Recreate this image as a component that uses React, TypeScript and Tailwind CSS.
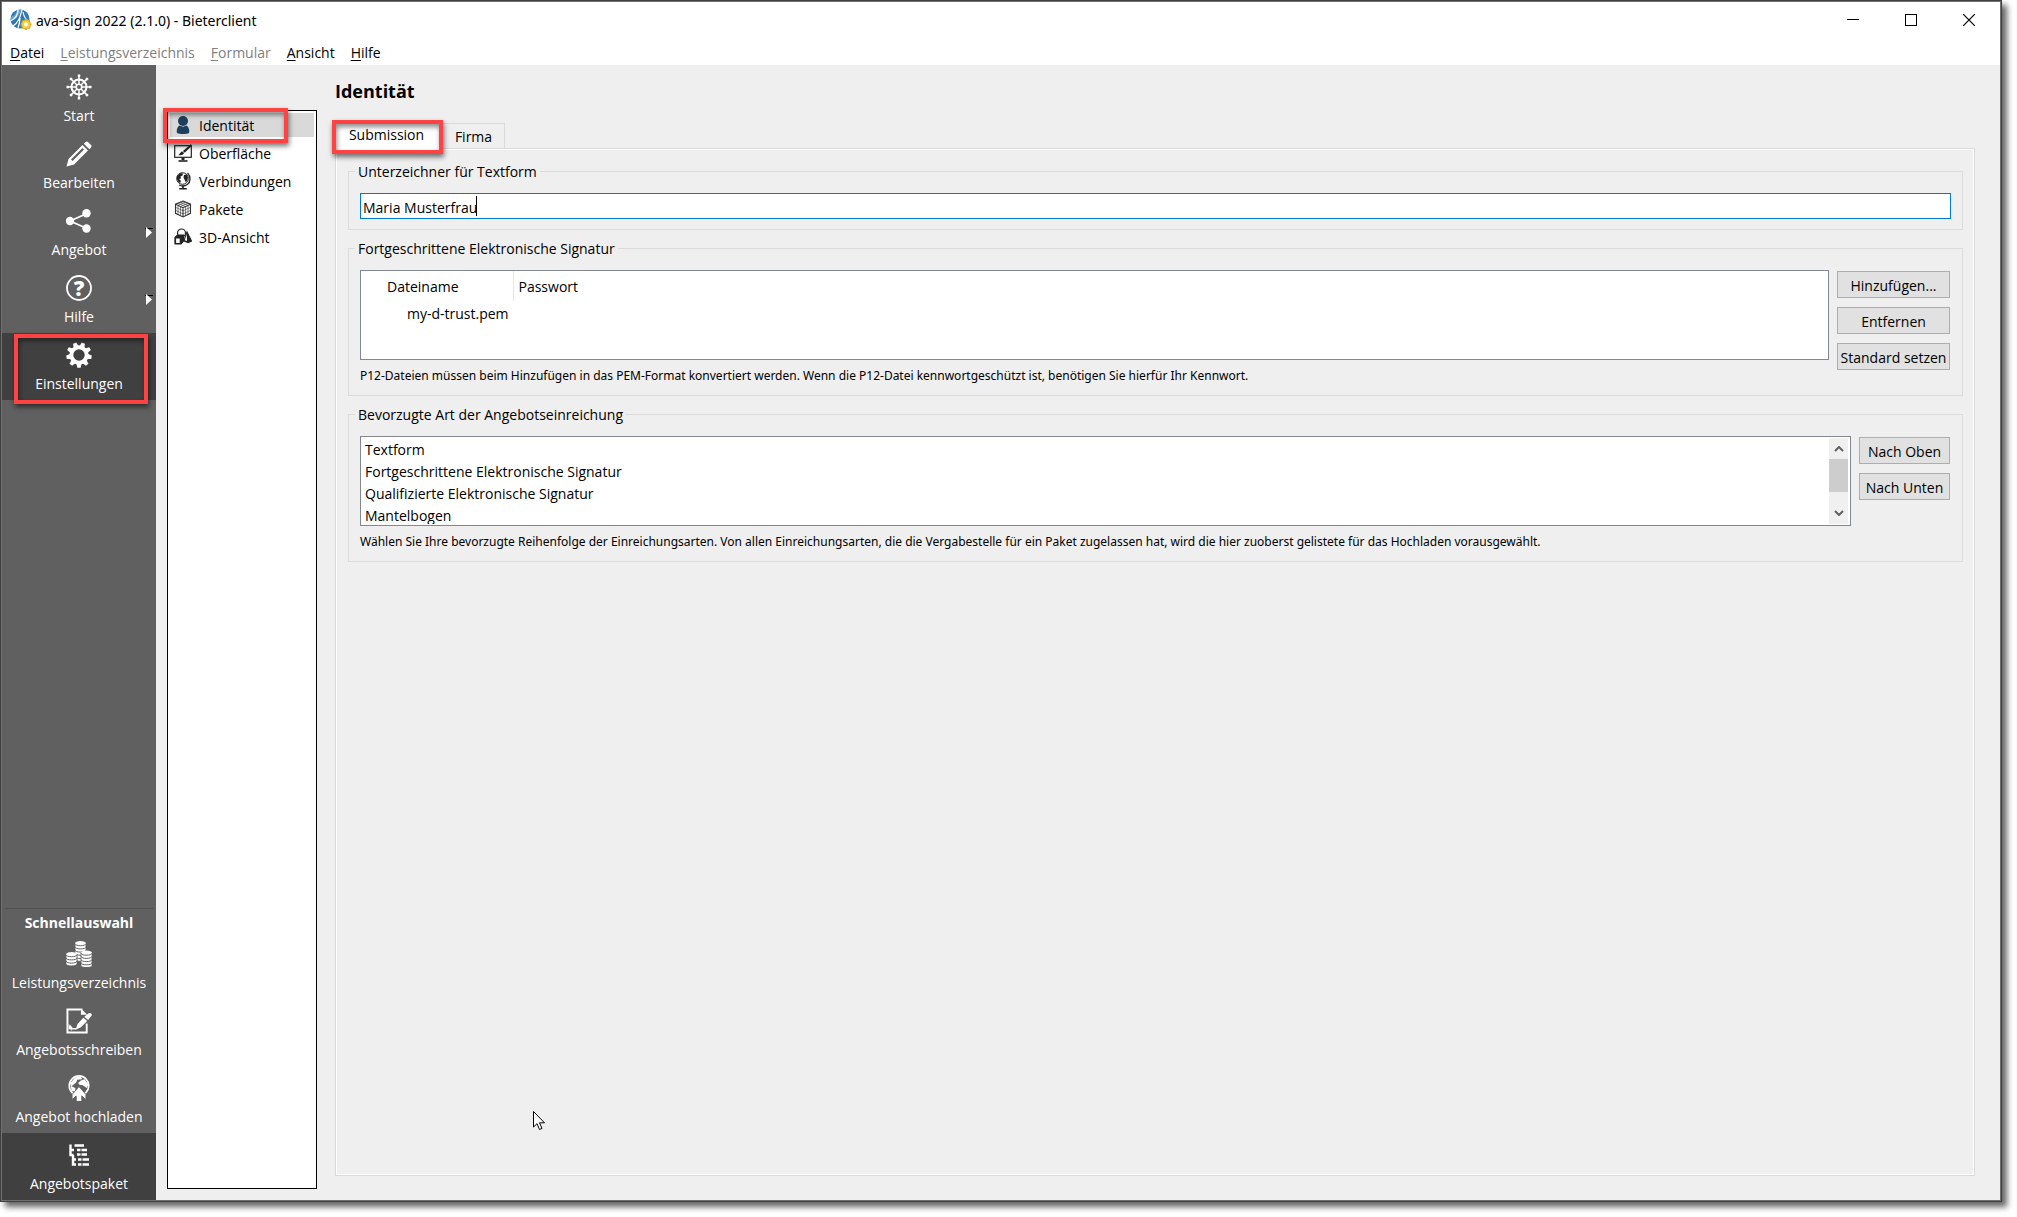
import type { ReactNode } from 'react';

type IconProps = { className?: string };

const AppLogo = () => (
  <svg viewBox="0 0 22 22" className="h-[22px] w-[22px] shrink-0" aria-hidden="true">
    <circle cx="10" cy="10" r="9.5" fill="#2f78b8" />
    <path d="M1 8 C4 7 6 5 7 1 L11 0.5 C10 6 7 10 0.5 12 Z" fill="#6aa6d8" />
    <path d="M8 0.500 C8 7 5 10 0.500 12 M12 1 C10 8 9 13 3 17 M10 9 C10 13 9 16 8 19 M13 3 C14 8 16 11 19 12" fill="none" stroke="#fff" strokeWidth="1.2" />
    <circle cx="16" cy="15.500" r="5" fill="#e3b71f" />
    <path d="M16 10v11M10.500 15.500h11M12.100 11.600l7.800 7.800M19.900 11.600l-7.800 7.800" stroke="#d6a81c" strokeWidth="2" />
    <circle cx="16" cy="15.500" r="4" fill="#f0cf4a" />
    <circle cx="16" cy="15.500" r="2" fill="#fff" />
  </svg>
);

const WheelIcon = ({ className }: IconProps) => (
  <svg viewBox="0 0 26 26" className={className} fill="none" stroke="currentColor" aria-hidden="true">
    <circle cx="13" cy="13" r="7.5" strokeWidth="2" />
    <circle cx="13" cy="13" r="2.8" strokeWidth="1.6" />
    {[0, 45, 90, 135, 180, 225, 270, 315].map((a) => (
      <g key={a} transform={`rotate(${a} 13 13)`}>
        <path d="M13 1v9.500" strokeWidth="1.5" />
        <path d="M13 0.500v2.500" strokeWidth="2.5" />
      </g>
    ))}
  </svg>
);

const PencilIcon = ({ className }: IconProps) => (
  <svg viewBox="0 0 26 26" className={className} fill="currentColor" aria-hidden="true">
    <path fillRule="evenodd" d="M0.500 25.500L2.500 18L16.500 4L22 9.500L8 23.500Z M5 18.500L6.500 20L18 8.500L16.500 7Z" />
    <path d="M17.800 2.700L19.500 1C20.300 0.300 21.300 0.300 22 1L25 4C25.700 4.700 25.700 5.700 25 6.500L23.300 8.200Z" />
  </svg>
);

const ShareIcon = ({ className }: IconProps) => (
  <svg viewBox="0 0 26 26" className={className} fill="currentColor" aria-hidden="true">
    <path d="M4 13L21 5.500M4 13L21 20.500" stroke="currentColor" strokeWidth="1.8" />
    <circle cx="4" cy="13" r="4.200" />
    <circle cx="20.500" cy="5.300" r="4.200" />
    <circle cx="20.500" cy="20.500" r="4.200" />
  </svg>
);

const HelpIcon = ({ className }: IconProps) => (
  <svg viewBox="0 0 26 26" className={className} fill="currentColor" aria-hidden="true">
    <circle cx="13" cy="13" r="12" fill="none" stroke="currentColor" strokeWidth="1.8" />
    <text x="13" y="20.500" textAnchor="middle" fontFamily="Open Sans" fontSize="21" fontWeight="800">?</text>
  </svg>
);

const GearIcon = ({ className }: IconProps) => (
  <svg viewBox="0 0 26 26" className={className} fill="currentColor" aria-hidden="true">
    <circle cx="13" cy="13" r="7.700" fill="none" stroke="currentColor" strokeWidth="4" />
    {[20, 60, 100, 140, 180, 220, 260, 300, 340].map((a) => (
      <path key={a} transform={`rotate(${a} 13 13)`} d="M10.300 5L11.300 0.300H14.700L15.700 5Z" />
    ))}
  </svg>
);

const Coins = ({ x, y, rows }: { x: number; y: number; rows: number }) => (
  <g>
    <path d={`M${x} ${y + 2.2}v${rows * 3.2}c0 2.800 11 2.800 11 0v-${rows * 3.2}z`} stroke="#606060" strokeWidth="0.800" />
    <ellipse cx={x + 5.5} cy={y + 2.2} rx="5.500" ry="2.100" />
    {Array.from({ length: rows }, (_, i) => (
      <path key={i} d={`M${x} ${y + 2.6 + i * 3.2}c0 2.800 11 2.800 11 0`} fill="none" stroke="#606060" strokeWidth="1" />
    ))}
  </g>
);

const CoinsIcon = ({ className }: IconProps) => (
  <svg viewBox="0 0 26 26" className={className} fill="currentColor" aria-hidden="true">
    <Coins x={9} y={0} rows={5} />
    <Coins x={0} y={11} rows={3} />
    <Coins x={15} y={9.5} rows={4} />
  </svg>
);

const LetterIcon = ({ className }: IconProps) => (
  <svg viewBox="0 0 27 26" className={className} fill="none" stroke="currentColor" aria-hidden="true">
    <path d="M17 1H1.500v24h20V15.500" strokeWidth="2" />
    <path d="M15.500 0L22 6.500H15.500z" fill="currentColor" stroke="none" />
    <path d="M3.500 21.500v-3l1.500 2.500v-2l1.500 2h4" strokeWidth="1.500" />
    <path d="M10 22l2-6L18 9.500l4 3.500-6.500 6.500z" fill="currentColor" stroke="none" />
    <path d="M19 8.500L23.500 5c2-1 4 0.500 3 2.500L23 12z" fill="currentColor" stroke="none" />
  </svg>
);

const UploadIcon = ({ className }: IconProps) => (
  <svg viewBox="0 0 26 28" className={className} fill="none" stroke="currentColor" aria-hidden="true">
    <circle cx="13" cy="11.500" r="10.500" strokeWidth="1.800" />
    <path d="M3.500 9L9 2.500L15 2L16.500 4.500L11 5L10 8L5 12L9 14L9 18L5 17Z M15 6L19 4.500L23 10L21.500 14L17 11L13.500 10.500L12 8.500Z" fill="currentColor" stroke="none" />
    <path d="M13 12.500L20.500 21v5.500l-4.500-4v6h-6v-6L5.500 26.500v-5.500z" fill="currentColor" stroke="#606060" strokeWidth="1" />
  </svg>
);

const TreeIcon = ({ className }: IconProps) => (
  <svg viewBox="0 0 26 26" className={className} fill="none" stroke="currentColor" strokeWidth="2.400" aria-hidden="true">
    <path d="M4.500 2.500v10.500H7.500M7 13v9.500h3M4 8h4M7 17.500h3" />
    <path d="M8.500 3.500h9.500M11 8h3.500M15.500 8H21M11 12.500h3.500M15.500 12.500H21M12 17.500h3.500M16.500 17.500H23M12 22.500h3.500M16.500 22.500H23" />
  </svg>
);

const UserIcon = ({ className }: IconProps) => (
  <svg viewBox="0 0 18 18" className={className} fill="#1c3f5c" aria-hidden="true">
    <circle cx="9" cy="5" r="5" />
    <path d="M3 17c-1-4 1-7 3-7.500 2 1.500 4 1.500 6 0 2 0.500 4 3.500 3 7.500-3 1.300-9 1.300-12 0z" />
  </svg>
);

const DisplayIcon = ({ className }: IconProps) => (
  <svg viewBox="0 0 18 18" className={className} fill="none" stroke="#222" aria-hidden="true">
    <rect x="0.700" y="1.700" width="16.600" height="11.600" strokeWidth="1.200" />
    <path d="M9 13.500v2.500" strokeWidth="3" />
    <path d="M4.500 17h9" strokeWidth="1.600" />
    <path d="M17 0L9 7l1.700 1.700L17.500 2z" fill="#222" stroke="none" />
    <path d="M8.500 7.500c-2 0-2 2-4 3.500 2.500 0.500 5 0 5.500-2z" fill="#222" stroke="none" />
  </svg>
);

const GlobeIcon = ({ className }: IconProps) => (
  <svg viewBox="0 0 18 18" className={className} fill="#222" aria-hidden="true">
    <circle cx="8.500" cy="6.500" r="5.800" fill="#fff" stroke="#222" strokeWidth="1" />
    <path d="M3 4.500L6 1.300L9 1.500L8.500 3.500L6.500 4.500L7 6.500L5 7L7 9L6 11L4 9.500L3 7Z M10 3L12.500 2.500L14 5.500L13 9L11.500 10L10.500 7.500L9.500 5.500Z" />
    <path d="M13.500 1c3.500 3.500 3.300 9-0.200 11.500-2.500 1.700-6 1.700-8.300 0.500" fill="none" stroke="#222" strokeWidth="1.300" />
    <path d="M8.200 13.500h1.600v2.500h3v1.500H5.200v-1.500h3z" />
  </svg>
);

const PackageIcon = ({ className }: IconProps) => (
  <svg viewBox="0 0 18 18" className={className} fill="none" stroke="#333" strokeWidth="1.100" aria-hidden="true">
    <path d="M9 1L16.500 4.200V13.300L9 17L1.500 13.300V4.200Z" />
    <path d="M1.500 4.200L9 7.700L16.500 4.200M9 7.700V17" />
    <path
      d="M4 5.500v9M6.500 6.700v9M11.500 6.700v9M14 5.500v9M1.500 7.300L9 10.800L16.500 7.300M1.500 10.300L9 13.900L16.500 10.300M4 3.100L11.500 6.500M6.500 2L14 5.400M14 3.100L6.500 6.500M11.500 2L4 5.400"
      strokeWidth="0.600"
    />
  </svg>
);

const ShapesIcon = ({ className }: IconProps) => (
  <svg viewBox="0 0 18 18" className={className} fill="none" stroke="#222" strokeWidth="1.200" aria-hidden="true">
    <circle cx="7.500" cy="5" r="4" fill="#fff" />
    <path d="M13 4L17.500 13L14 14.500L10 13Z" fill="#222" />
    <path d="M12.800 6l-2 6.200 2.200 0.800z" fill="#fff" stroke="none" />
    <path d="M1 9.500L3.500 7H9.500V13L7 16H1Z" fill="#222" />
    <rect x="1.500" y="10" width="4.800" height="5.500" rx="0.500" fill="#fff" />
  </svg>
);

// Red marker frame laid over a control.
const Marker = ({ className }: IconProps) => (
  <span
    aria-hidden="true"
    className={`pointer-events-none absolute z-10 border-4 border-[#ff4343] shadow-[1px_3px_5px_rgba(0,0,0,0.55),inset_1px_3px_5px_rgba(0,0,0,0.45)] ${className}`}
  />
);

type SideItemProps = {
  icon: ReactNode;
  label: string;
  active?: boolean;
  flyout?: boolean;
  marked?: boolean;
};

const SideItem = ({ icon, label, active, flyout, marked }: SideItemProps) => (
  <button
    type="button"
    className={`relative flex w-full flex-col items-center gap-1.5 pt-[9px] pb-1.5 leading-5 text-white ${active ? 'bg-[#404040]' : ''}`}
  >
    {icon}
    <span className="whitespace-nowrap">{label}</span>
    {flyout && (
      <svg viewBox="0 0 8 12" className="absolute top-7 right-[3px] h-3 w-2" aria-hidden="true">
        <path d="M0 1.500h8" stroke="#000" strokeWidth="1" />
        <path d="M1 0L7 5.500L1 11Z" fill="#fff" />
      </svg>
    )}
    {marked && <Marker className="top-px right-2 -bottom-1 left-3" />}
  </button>
);

const menu = [
  { label: 'Datei' },
  { label: 'Leistungsverzeichnis', disabled: true },
  { label: 'Formular', disabled: true },
  { label: 'Ansicht' },
  { label: 'Hilfe' },
];

const ICON = 'h-[26px] w-[26px]';
const SMALL_ICON = 'h-[18px] w-[18px] shrink-0';

const pages = [
  { label: 'Identität', icon: <UserIcon className={SMALL_ICON} /> },
  { label: 'Oberfläche', icon: <DisplayIcon className={SMALL_ICON} /> },
  { label: 'Verbindungen', icon: <GlobeIcon className={SMALL_ICON} /> },
  { label: 'Pakete', icon: <PackageIcon className={SMALL_ICON} /> },
  { label: '3D-Ansicht', icon: <ShapesIcon className={SMALL_ICON} /> },
];

const submissionTypes = [
  'Textform',
  'Fortgeschrittene Elektronische Signatur',
  'Qualifizierte Elektronische Signatur',
  'Mantelbogen',
];

const PushButton = ({ children }: { children: ReactNode }) => (
  <button
    type="button"
    className="h-[27px] w-full border border-[#adadad] bg-[#e1e1e1] pt-0.5 text-center leading-5 whitespace-nowrap"
  >
    {children}
  </button>
);

const Group = ({ title, children }: { title: string; children: ReactNode }) => (
  <fieldset className="min-w-0 border border-[#dcdcdc] px-[11px] pb-2.5">
    <legend className="-ml-[5px] px-[3px] pt-0.5 leading-[18px]">{title}</legend>
    {children}
  </fieldset>
);

const Hint = ({ children }: { children: ReactNode }) => (
  <p className="mt-[7px] font-['Noto_Sans','Open_Sans',sans-serif] text-[12px] leading-[18px]">{children}</p>
);

const TitleBar = () => (
  <header className="flex h-9 items-center bg-white pr-0.5 pl-2">
    <AppLogo />
    <h1 className="ml-1 flex-1 font-['Noto_Sans','Open_Sans',sans-serif]">ava-sign 2022 (2.1.0) - Bieterclient</h1>
    <div className="flex">
      <button type="button" aria-label="Minimieren" className="flex h-9 w-[58px] items-center justify-center">
        <svg viewBox="0 0 12 12" className="h-3 w-3"><path d="M0 5.500h12" stroke="#000" /></svg>
      </button>
      <button type="button" aria-label="Maximieren" className="flex h-9 w-[58px] items-center justify-center">
        <svg viewBox="0 0 12 12" className="h-3 w-3"><rect x="0.500" y="0.500" width="11" height="11" fill="none" stroke="#000" /></svg>
      </button>
      <button type="button" aria-label="Schließen" className="flex h-9 w-[58px] items-center justify-center">
        <svg viewBox="0 0 12 12" className="h-3 w-3"><path d="M0 0l12 12M12 0L0 12" stroke="#000" strokeWidth="1.200" /></svg>
      </button>
    </div>
  </header>
);

const Sidebar = () => (
  <aside className="flex w-[154px] shrink-0 flex-col bg-[#606060]">
    <nav aria-label="Hauptnavigation">
      <SideItem icon={<WheelIcon className={ICON} />} label="Start" />
      <SideItem icon={<PencilIcon className={ICON} />} label="Bearbeiten" />
      <SideItem icon={<ShareIcon className={ICON} />} label="Angebot" flyout />
      <SideItem icon={<HelpIcon className={ICON} />} label="Hilfe" flyout />
      <SideItem icon={<GearIcon className={ICON} />} label="Einstellungen" active marked />
    </nav>
    <nav aria-label="Schnellauswahl" className="mt-auto">
      <h2 className="mx-[3px] border-t border-[#505050] pt-[5px] text-center leading-[18px] font-bold text-white">
        Schnellauswahl
      </h2>
      <SideItem icon={<CoinsIcon className={ICON} />} label="Leistungsverzeichnis" />
      <SideItem icon={<LetterIcon className={ICON} />} label="Angebotsschreiben" />
      <SideItem icon={<UploadIcon className={ICON} />} label="Angebot hochladen" />
      <SideItem icon={<TreeIcon className={ICON} />} label="Angebotspaket" active />
    </nav>
  </aside>
);

const SubmissionPanel = () => (
  <div
    role="tabpanel"
    className="flex flex-1 flex-col gap-2 border border-[#dadada] pt-3 pr-[11px] pl-3 shadow-[inset_0_0_0_1px_#fff]"
  >
    <Group title="Unterzeichner für Textform">
      <div className="relative mt-3">
        <input
          aria-label="Unterzeichner für Textform"
          defaultValue="Maria Musterfrau"
          className="block h-[26px] w-full border border-[#0078d7] bg-white px-0.5 pt-0.5 leading-5 outline-none"
        />
        <span aria-hidden="true" className="absolute top-[3px] left-[116px] h-5 w-px bg-black" />
      </div>
    </Group>

    <Group title="Fortgeschrittene Elektronische Signatur">
      <div className="mt-3 flex h-[90px] items-start gap-2">
        <div className="h-[90px] flex-1 border border-[#828790] bg-white">
          <table className="w-full border-collapse text-left leading-5">
            <thead>
              <tr>
                <th className="h-[30px] w-[152px] border-r border-[#e5e5e5] p-0 pt-0.5 pl-[26px] font-normal">Dateiname</th>
                <th className="p-0 pt-0.5 pl-[5px] font-normal">Passwort</th>
              </tr>
            </thead>
            <tbody>
              <tr>
                <td className="p-0 pt-[3px] pl-[46px] whitespace-nowrap">my-d-trust.pem</td>
                <td />
              </tr>
            </tbody>
          </table>
        </div>
        <div className="mt-px mr-px flex w-[113px] flex-col gap-[9px]">
          <PushButton>Hinzufügen...</PushButton>
          <PushButton>Entfernen</PushButton>
          <PushButton>Standard setzen</PushButton>
        </div>
      </div>
      <Hint>
        P12-Dateien müssen beim Hinzufügen in das PEM-Format konvertiert werden. Wenn die P12-Datei kennwortgeschützt ist, benötigen Sie hierfür Ihr Kennwort.
      </Hint>
    </Group>

    <Group title="Bevorzugte Art der Angebotseinreichung">
      <div className="mt-3 flex items-start gap-2">
        <div className="flex h-[90px] flex-1 border border-[#828790] bg-white py-px pr-0.5 pl-px">
          <ul
            role="listbox"
            aria-label="Bevorzugte Art der Angebotseinreichung"
            className="flex-1 overflow-hidden pt-px pl-[3px] leading-[22px]"
          >
            {submissionTypes.map((type) => (
              <li key={type} role="option" aria-selected="false">{type}</li>
            ))}
          </ul>
          <div className="flex w-[19px] flex-col items-center bg-[#f0f0f0]">
            <svg viewBox="0 0 10 6" className="mt-2 mb-[7px] h-1.5 w-2.5" aria-hidden="true">
              <path d="M1 5L5 1L9 5" fill="none" stroke="#606060" strokeWidth="2" />
            </svg>
            <div className="h-[33px] w-full bg-[#cdcdcd]" />
            <svg viewBox="0 0 10 6" className="mt-auto mb-2 h-1.5 w-2.5" aria-hidden="true">
              <path d="M1 1L5 5L9 1" fill="none" stroke="#606060" strokeWidth="2" />
            </svg>
          </div>
        </div>
        <div className="mt-px mr-px flex w-[91px] flex-col gap-[9px]">
          <PushButton>Nach Oben</PushButton>
          <PushButton>Nach Unten</PushButton>
        </div>
      </div>
      <Hint>
        Wählen Sie Ihre bevorzugte Reihenfolge der Einreichungsarten. Von allen Einreichungsarten, die die Vergabestelle für ein Paket zugelassen hat, wird die hier zuoberst gelistete für das Hochladen vorausgewählt.
      </Hint>
    </Group>
  </div>
);

export default function App() {
  return (
    <div className="relative flex min-h-screen bg-white pr-[15px] pb-[15px] font-['Open_Sans','Noto_Sans',sans-serif] text-[14px] text-black">
      <div className="flex flex-1 flex-col border border-[#404040] shadow-[5px_5px_6px_rgba(0,0,0,0.6)]">
        <div className="flex flex-1 flex-col border border-[#707070] bg-[#efefef]">
          <TitleBar />
          <nav aria-label="Menü" className="flex h-[27px] items-center gap-4 bg-white pt-0.5 pl-2">
            {menu.map(({ label, disabled }) => (
              <button key={label} type="button" disabled={disabled} className="leading-5 disabled:text-[#808080]">
                <span className="underline underline-offset-2">{label[0]}</span>
                {label.slice(1)}
              </button>
            ))}
          </nav>
          <div className="flex flex-1">
            <Sidebar />
            <main className="flex flex-1 pr-[25px]">
              <nav
                aria-label="Einstellungsseiten"
                className="mt-[45px] mb-[11px] ml-[11px] w-[150px] shrink-0 border border-black bg-white px-0.5 pt-0.5"
              >
                {pages.map(({ label, icon }, i) => (
                  <button
                    key={label}
                    type="button"
                    className={`relative mb-1 flex h-6 w-full items-center gap-[7px] pl-1 leading-5 ${i === 0 ? 'bg-[#d9d9d9]' : ''}`}
                  >
                    {icon}
                    <span className="pt-0.5">{label}</span>
                    {i === 0 && <Marker className="-top-[5px] right-[26px] -bottom-1.5 -left-[7px]" />}
                  </button>
                ))}
              </nav>
              <section className="mb-6 ml-[18px] flex min-w-0 flex-1 flex-col">
                <h2 className="mt-3.5 text-[18px] leading-6 font-bold">Identität</h2>
                <div role="tablist" className="relative z-10 mt-[17px] -mb-px flex items-end">
                  <button type="button" role="tab" aria-selected="true" className="relative h-[29px] w-[107px] bg-white pr-1 leading-5">
                    Submission
                    <Marker className="top-0 -right-px -bottom-[5px] -left-[3px]" />
                  </button>
                  <button type="button" role="tab" aria-selected="false" className="h-[26px] w-[63px] border border-[#dadada] pt-px leading-5">
                    Firma
                  </button>
                </div>
                <SubmissionPanel />
              </section>
            </main>
          </div>
        </div>
      </div>
      {/* mouse pointer */}
      <svg viewBox="0 0 13 20" className="absolute top-[1111px] left-[533px] h-5 w-[13px]" aria-hidden="true">
        <path d="M0.500 0.500V16L4 12.700L6.500 18.500L9 17.400L6.500 11.800H11.500Z" fill="#fff" stroke="#000" />
      </svg>
    </div>
  );
}
